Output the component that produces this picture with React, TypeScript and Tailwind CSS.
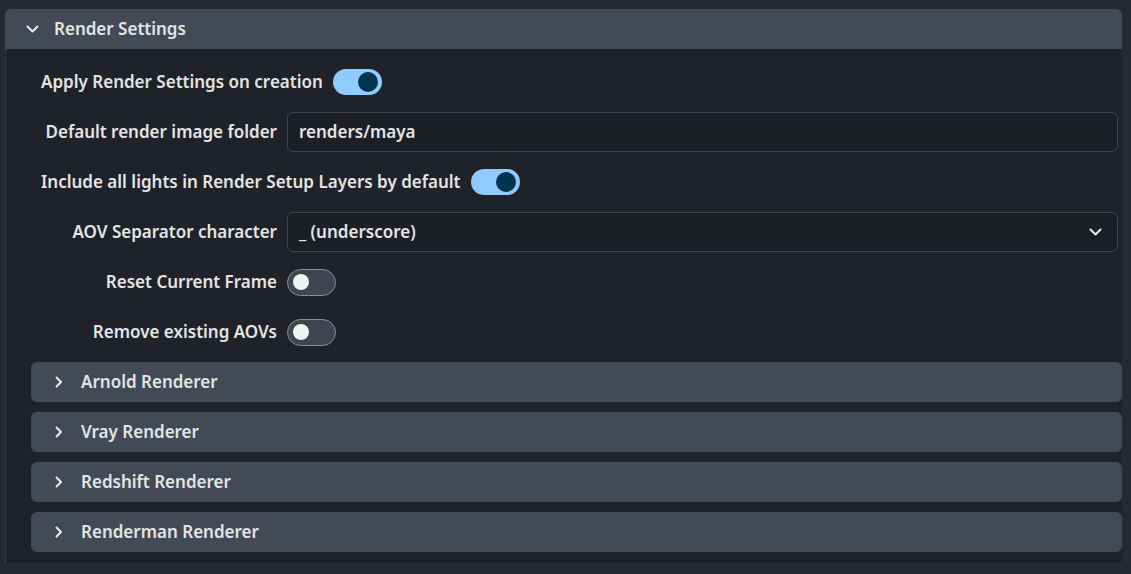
function ChevDown() {
  return (
    <svg width="13" height="8" viewBox="0 0 13 8" fill="none" className="shrink-0">
      <path d="M1.5 1.5 L6.5 6.5 L11.5 1.5" stroke="#ececec" strokeWidth="2" strokeLinecap="round" strokeLinejoin="round" />
    </svg>
  )
}

function ChevRight() {
  return (
    <svg width="8" height="12" viewBox="0 0 8 12" fill="none" className="shrink-0">
      <path d="M1.5 1.5 L6 6 L1.5 10.5" stroke="#ececec" strokeWidth="2" strokeLinecap="round" strokeLinejoin="round" />
    </svg>
  )
}

function Toggle({ on }: { on: boolean }) {
  if (on) {
    return (
      <div className="w-[49px] h-[26px] rounded-full bg-[#8ecbff] flex items-center justify-end pr-[4px] shrink-0">
        <div className="w-[20px] h-[20px] rounded-full bg-[#003350]" />
      </div>
    )
  }
  return (
    <div className="w-[49px] h-[27px] rounded-full bg-[#3e4450] border border-[#8a9099] flex items-center pl-[5px] shrink-0">
      <div className="w-[16px] h-[16px] rounded-full bg-[#f2f2f2]" />
    </div>
  )
}

function Label({ children }: { children: React.ReactNode }) {
  return <div className="w-[236px] shrink-0 text-right">{children}</div>
}

function Sub({ title }: { title: string }) {
  return (
    <div className="h-[40px] rounded-[6px] bg-[#434a56] flex items-center pl-[24px] gap-[18px]">
      <ChevRight />
      <span>{title}</span>
    </div>
  )
}

export default function App() {
  return (
    <div
      className="w-[1131px] h-[574px] bg-[#252a31] pt-[9px] pl-[5px] pr-[9px] text-[17px] font-semibold text-[#e4e4e4]"
      style={{ fontFamily: '"Noto Sans", sans-serif' }}
    >
      <div className="h-[40px] rounded-t-[6px] bg-[#434a56] flex items-center pl-[21px] gap-[15px]">
        <ChevDown />
        <span>Render Settings</span>
      </div>
      <div className="bg-[#1f2228] border-l border-dotted border-[#4a505a] pt-[13px] pb-[11px] pl-[25px] flex flex-col gap-[10px]">
        <div className="h-[40px] flex items-center gap-[10px] pl-[10px]">
          <span>Apply Render Settings on creation</span>
          <Toggle on />
        </div>
        <div className="h-[40px] flex items-center gap-[10px] pl-[10px] pr-[4px]">
          <Label>Default render image folder</Label>
          <div className="flex-1 h-[40px] rounded-[6px] border border-[#40454d] bg-[#1c1f24] flex items-center px-[11px]">
            renders/maya
          </div>
        </div>
        <div className="h-[40px] flex items-center gap-[10px] pl-[10px]">
          <span>Include all lights in Render Setup Layers by default</span>
          <Toggle on />
        </div>
        <div className="h-[40px] flex items-center gap-[10px] pl-[10px] pr-[4px]">
          <Label>AOV Separator character</Label>
          <div className="flex-1 h-[40px] rounded-[6px] border border-[#40454d] bg-[#1c1f24] flex items-center justify-between pl-[11px] pr-[15px]">
            <span>_ (underscore)</span>
            <ChevDown />
          </div>
        </div>
        <div className="h-[40px] flex items-center gap-[10px] pl-[10px]">
          <Label>Reset Current Frame</Label>
          <Toggle on={false} />
        </div>
        <div className="h-[40px] flex items-center gap-[10px] pl-[10px]">
          <Label>Remove existing AOVs</Label>
          <Toggle on={false} />
        </div>
        <Sub title="Arnold Renderer" />
        <Sub title="Vray Renderer" />
        <Sub title="Redshift Renderer" />
        <Sub title="Renderman Renderer" />
      </div>
    </div>
  )
}
